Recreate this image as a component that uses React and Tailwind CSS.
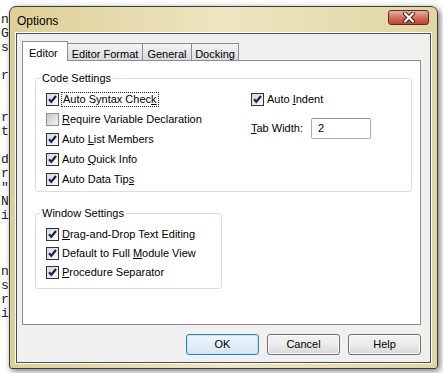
import React from 'react';

const codeLines = ['n', 'G', 's', '', 'r', '', '', 'r', 't', '', 'd', 'r', '"', 'N', 'i', '', '', '', 'n', 's', 'r', 'i'];

function Check({ checked = true }) {
  return (
    <span
      className={
        checked
          ? 'flex w-[13px] h-[13px] shrink-0 items-center justify-center border border-[#333] bg-linear-to-br from-[#d6d8dc] to-[#fbfbfb]'
          : 'flex w-[13px] h-[13px] shrink-0 items-center justify-center border border-[#8f8f8f] bg-linear-to-br from-[#c8c9cc] to-[#f4f4f4]'
      }
    >
      {checked && (
        <svg width="11" height="11" viewBox="0 0 11 11">
          <path d="M2 5.2 L4.3 7.8 L9 2" fill="none" stroke="#1b2552" strokeWidth="2.2" />
        </svg>
      )}
    </span>
  );
}

function CheckRow({ checked, children, focus, h = 'h-[20px]' }) {
  return (
    <div className={`flex items-center ${h}`}>
      <Check checked={checked} />
      <span className={focus ? 'ml-[2px] px-px border border-dotted border-[#222] leading-[13px]' : 'ml-[3px]'}>
        {children}
      </span>
    </div>
  );
}

function Btn({ children, primary }) {
  return (
    <button
      type="button"
      className={
        primary
          ? 'w-[73px] h-[21px] rounded-[3px] border border-[#3c7fb1] bg-linear-to-b from-[#eef5fa] to-[#d6e6f2] shadow-[inset_0_0_0_1px_#bfe2f8] text-[11px] text-black'
          : 'w-[73px] h-[21px] rounded-[3px] border border-[#707070] bg-linear-to-b from-[#f2f2f2] via-[#ebebeb] to-[#d8d8d8] shadow-[inset_0_0_0_1px_#fbfbfb] text-[11px] text-black'
      }
    >
      {children}
    </button>
  );
}

export default function App() {
  return (
    <div className="relative w-[443px] h-[373px] overflow-hidden bg-white font-['Liberation_Sans',sans-serif] text-[11px] text-black">
      {/* editor behind the dialog */}
      <div className="pt-[13px] pl-px font-['Liberation_Mono',monospace] text-[13px] leading-[14px] text-[#222]">
        {codeLines.map((c, i) => (
          <div key={i} className="h-[14px]">{c}</div>
        ))}
      </div>

      {/* dialog window */}
      <div className="absolute left-[9px] top-[6px] w-[429px] h-[363px] flex flex-col rounded-t-[7px] rounded-b-[3px] border border-[#3d3d3d] bg-linear-to-r from-[#ddcf96] via-[#eee5c2] to-[#dfd6a2] shadow-[2px_2px_6px_rgba(0,0,0,0.55)]">
        <div className="h-[26px] flex justify-between">
          <span className="pl-[7px] pt-[5px] text-[12px] text-black">Options</span>
          <div className="mt-[3px] mr-[8px] w-[41px] h-[15px] rounded-[3px] border border-[#5b2a20] bg-linear-to-b from-[#eab1a4] via-[#d0705d] to-[#c0442e] flex items-center justify-center">
            <svg width="14" height="11" viewBox="0 0 14 11">
              <path d="M3 1.5 L11 9.5 M11 1.5 L3 9.5" stroke="#4a1a12" strokeWidth="4" strokeLinecap="round" />
              <path d="M3 1.5 L11 9.5 M11 1.5 L3 9.5" stroke="#ffffff" strokeWidth="2.2" strokeLinecap="round" />
            </svg>
          </div>
        </div>

        {/* client area */}
        <div className="ml-[6px] w-[415px] h-[330px] border border-[#4d4d4d] bg-[#f0f0f0] shadow-[0_0_0_1px_#ffffff] pt-[7px] pl-[5px] flex flex-col">
          {/* tabs */}
          <div className="flex items-end h-[19px]">
            <div className="relative z-10 -mb-px w-[46px] h-[20px] border border-b-0 border-[#898c95] bg-white pl-[6px] pt-[3px]">Editor</div>
            <div className="-ml-px w-[76px] h-[17px] border border-b-0 border-[#898c95] bg-linear-to-b from-[#f3f3f3] to-[#dcdcdc] text-center pt-[2px]">Editor Format</div>
            <div className="-ml-px w-[50px] h-[17px] border border-b-0 border-[#898c95] bg-linear-to-b from-[#f3f3f3] to-[#dcdcdc] text-center pt-[2px]">General</div>
            <div className="-ml-px w-[48px] h-[17px] border border-b-0 border-[#898c95] bg-linear-to-b from-[#f3f3f3] to-[#dcdcdc] text-center pt-[2px]">Docking</div>
          </div>

          {/* tab panel */}
          <div className="w-[399px] h-[265px] border border-[#898c95] bg-white flex flex-col">
            <fieldset className="mt-[10px] ml-[12px] w-[377px] border border-[#d5dfe5] rounded-[3px] pt-[4px] pb-[2px] pl-[10px] flex">
              <legend className="-ml-[6px] px-[2px] leading-[14px]">Code Settings</legend>
              <div className="w-[205px] flex flex-col">
                <CheckRow focus>Auto Syntax Chec<span className="underline">k</span></CheckRow>
                <CheckRow checked={false}><span className="underline">R</span>equire Variable Declaration</CheckRow>
                <CheckRow>Auto <span className="underline">L</span>ist Members</CheckRow>
                <CheckRow>Auto <span className="underline">Q</span>uick Info</CheckRow>
                <CheckRow>Auto Data Tip<span className="underline">s</span></CheckRow>
              </div>
              <div className="flex flex-col">
                <CheckRow>Auto <span className="underline">I</span>ndent</CheckRow>
                <div className="mt-[9px] flex items-center">
                  <span className="w-[60px]"><span className="underline">T</span>ab Width:</span>
                  <div className="w-[60px] h-[21px] rounded-[2px] border border-[#abadb3] border-t-[#8e9099] bg-white pl-[6px] flex items-center">2</div>
                </div>
              </div>
            </fieldset>

            <fieldset className="mt-[14px] ml-[12px] w-[187px] border border-[#d5dfe5] rounded-[3px] pt-[5px] pb-[6px] pl-[10px] flex flex-col">
              <legend className="-ml-[6px] px-[2px] leading-[14px]">Window Settings</legend>
              <CheckRow h="h-[19px]"><span className="underline">D</span>rag-and-Drop Text Editing</CheckRow>
              <CheckRow h="h-[19px]">Default to Full <span className="underline">M</span>odule View</CheckRow>
              <CheckRow h="h-[19px]"><span className="underline">P</span>rocedure Separator</CheckRow>
            </fieldset>
          </div>

          {/* buttons */}
          <div className="mt-[9px] w-[399px] flex justify-end gap-[8px]">
            <Btn primary>OK</Btn>
            <Btn>Cancel</Btn>
            <Btn>Help</Btn>
          </div>
        </div>
      </div>
    </div>
  );
}
